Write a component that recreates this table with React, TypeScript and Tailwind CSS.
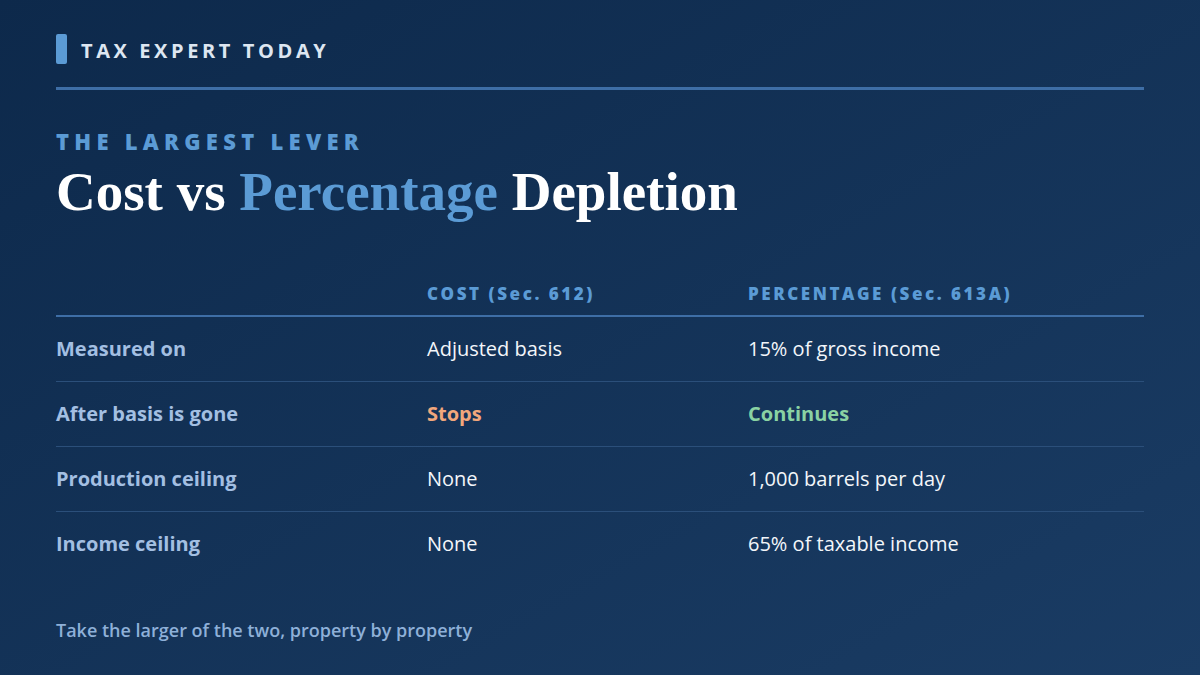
const rows = [
  { label: "Measured on", cost: "Adjusted basis", pct: "15% of gross income" },
  { label: "After basis is gone", cost: "Stops", pct: "Continues", accent: true },
  { label: "Production ceiling", cost: "None", pct: "1,000 barrels per day" },
  { label: "Income ceiling", cost: "None", pct: "65% of taxable income" },
];

export default function App() {
  return (
    <div
      className="w-[1200px] h-[675px] overflow-hidden bg-gradient-to-br from-[#0d294b] to-[#1a3c64] px-14 pt-[34px] text-white"
      style={{ fontFamily: '"Open Sans", "Noto Sans", sans-serif' }}
    >
      {/* Brand */}
      <div className="flex items-center gap-[14px] h-[30px]">
        <div className="w-[11px] h-[30px] rounded-[2px] bg-[#5b9bd5]" />
        <span className="mt-[3px] text-[20px] font-bold tracking-[0.18em] text-[#dde6f1]">TAX EXPERT TODAY</span>
      </div>
      <div className="mt-[23px] h-[3px] bg-[#3e6ea6]" />

      {/* Heading */}
      <div className="mt-[40px] text-[22px] font-extrabold tracking-[0.24em] text-[#5b9bd5] leading-none">
        THE LARGEST LEVER
      </div>
      <h1
        className="mt-[12px] text-[55px] font-bold leading-none"
        style={{ fontFamily: '"Liberation Serif", Georgia, serif' }}
      >
        Cost vs <span className="text-[#5b9bd5]">Percentage</span> Depletion
      </h1>

      {/* Table */}
      <div className="mt-[62px]">
        <div className="flex border-b-2 border-[#3e6ea6] pb-[8px] text-[17px] font-extrabold tracking-[0.15em] text-[#5b9bd5]">
          <div className="w-[371px]" />
          <div className="w-[321px]">COST (Sec. 612)</div>
          <div className="flex-1">PERCENTAGE (Sec. 613A)</div>
        </div>
        {rows.map((r, i) => (
          <div
            key={r.label}
            className={`flex items-center h-[65px] text-[20px] ${i < rows.length - 1 ? "border-b border-[#2b4f7a]" : ""}`}
          >
            <div className="w-[371px] font-bold text-[#a3bfe2]">{r.label}</div>
            <div className={`w-[321px] ${r.accent ? "font-bold text-[#f2a77c]" : "text-[#f3f6fa]"}`}>{r.cost}</div>
            <div className={`flex-1 ${r.accent ? "font-bold text-[#8ad3a3]" : "text-[#f3f6fa]"}`}>{r.pct}</div>
          </div>
        ))}
      </div>

      <p className="mt-[40px] text-[18px] font-semibold text-[#8eb0d8]">
        Take the larger of the two, property by property
      </p>
    </div>
  );
}
